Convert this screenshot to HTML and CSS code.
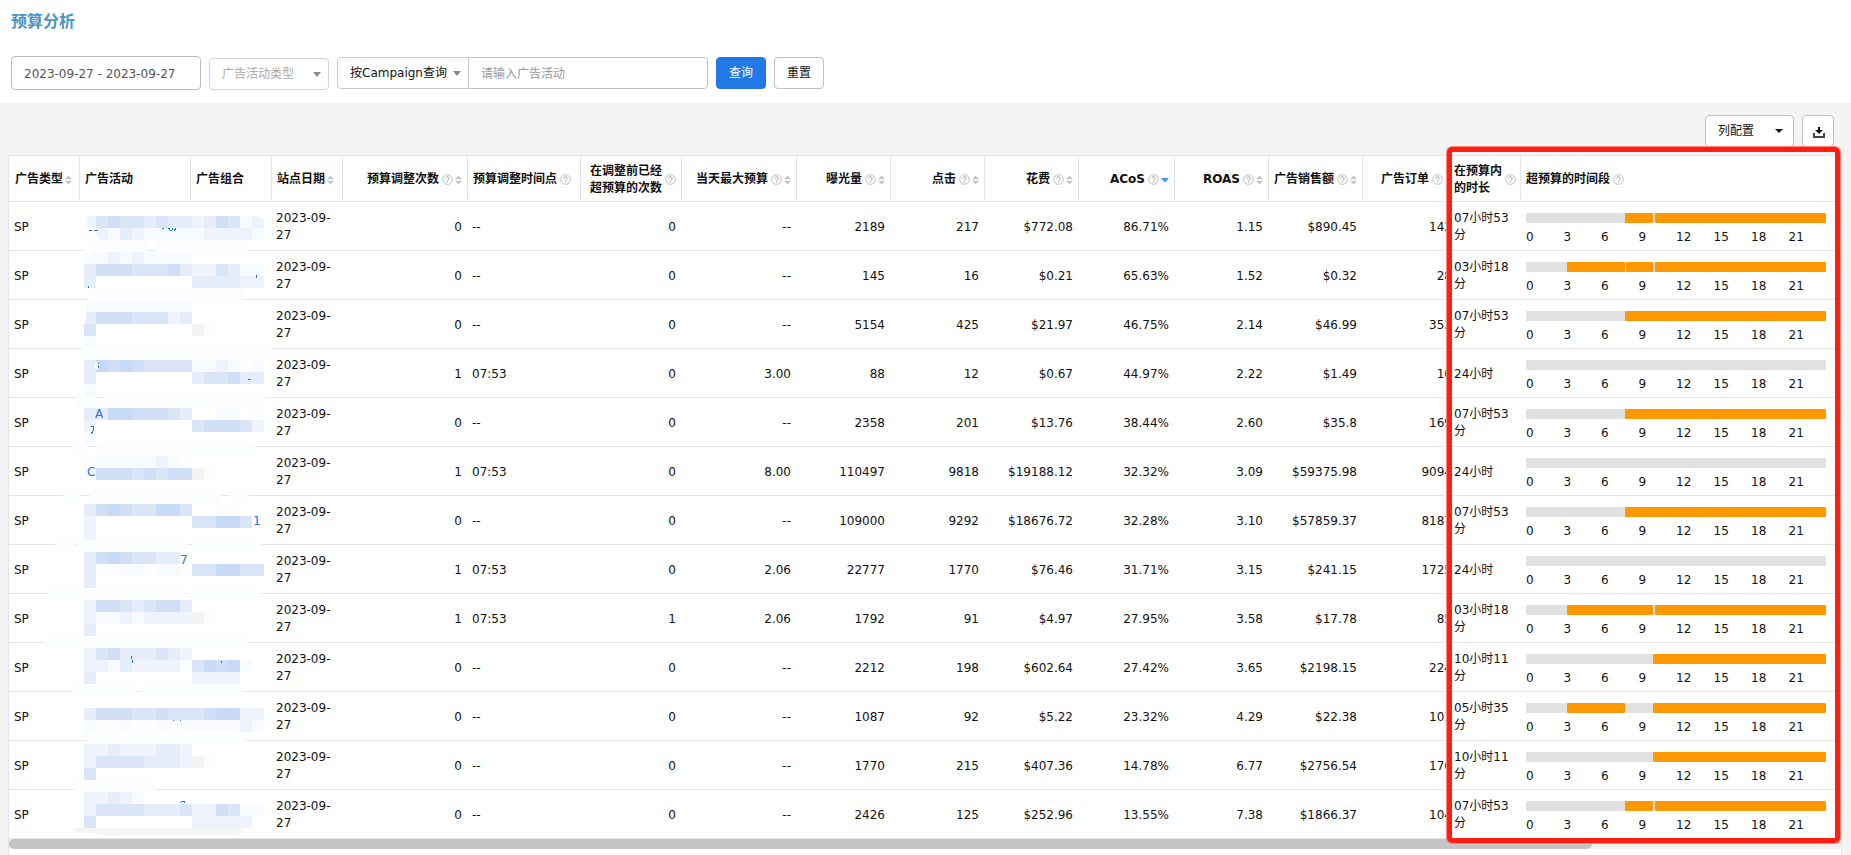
FILE: index.html
```
<!DOCTYPE html>
<html lang="zh-CN">
<head>
<meta charset="utf-8">
<title>预算分析</title>
<link rel="stylesheet" href="styles.css">
</head>
<body>
<header class="page-head">
  <h1 class="title">预算分析</h1>
  <form class="filters">
    <input class="field date-range" type="text" aria-label="日期范围" value="2023-09-27 - 2023-09-27">
    <span class="select-box type-box">
      <select class="field muted" aria-label="广告活动类型"><option>广告活动类型</option></select>
    </span>
    <span class="search-group">
      <span class="select-box mode-box">
        <select class="field" aria-label="查询方式"><option>按Campaign查询</option></select>
      </span>
      <input class="field keyword" type="text" aria-label="广告活动" placeholder="请输入广告活动">
    </span>
    <button class="btn primary" type="button">查询</button>
    <button class="btn" type="button">重置</button>
  </form>
</header>
<main class="content">
  <div class="toolbar">
    <button class="btn columns" type="button">列配置</button>
    <button class="btn icon-btn" type="button" aria-label="下载">
      <svg width="14" height="16" viewBox="0 0 14 16"><path d="M7 4h2v3h3l-4 4-4-4h3z" fill="#111"/><path d="M3 10v4h10v-4" fill="none" stroke="#444" stroke-width="2"/></svg>
    </button>
  </div>
  <section class="panel">
    <table class="grid">
      <colgroup>
        <col class="w-type"><col class="w-campaign"><col class="w-group"><col class="w-date">
        <col class="w-count"><col class="w-time"><col class="w-before"><col class="w-max">
        <col class="w-num"><col class="w-num"><col class="w-num"><col class="w-acos">
        <col class="w-num"><col class="w-num"><col class="w-orders"><col class="w-duration"><col>
      </colgroup>
      <thead><tr id="head"></tr></thead>
      <tbody id="rows"></tbody>
    </table>
    <svg class="mosaic" id="mosaic" width="280" height="684" viewBox="9 156 280 684" shape-rendering="crispEdges" aria-hidden="true"></svg>
    <div class="scroll-track"><div class="scroll-thumb"></div></div>
    <div class="highlight"></div>
  </section>
</main>
<script src="table.js"></script>
</body>
</html>
```
FILE: styles.css
```
* { box-sizing: border-box; }

body {
  margin: 0;
  min-height: 100vh;
  display: flex;
  flex-direction: column;
  overflow: hidden;
  background: #f4f4f4;
  color: #111;
  font: 12px/17px "DejaVu Sans", "Noto Sans CJK SC", sans-serif;
}

.page-head { padding: 10px 11px 13px; background: #fff; }
.title { margin: 0 0 22px; font-size: 16px; line-height: 24px; font-weight: 700; color: #4a94c6; }

.filters { display: flex; align-items: center; gap: 8px; }

.field {
  height: 32px;
  border: 1px solid #c8c8c8;
  border-radius: 4px;
  padding: 0 12px;
  background: #fff;
  color: #111;
  font: inherit;
}
.field::placeholder { color: #999; opacity: 1; }
.date-range { width: 190px; height: 34px; padding-top: 2px; border-color: #bbb; color: #555; }
.muted { color: #aaa; border-color: #d4d4d4; }

.select-box { position: relative; display: block; }
.select-box .field { width: 100%; appearance: none; display: block; }
.select-box::after {
  content: "";
  position: absolute;
  right: 8px;
  top: 14px;
  border: 4px solid transparent;
  border-top: 5px solid #888;
  border-bottom: 0;
  pointer-events: none;
}
.type-box { width: 120px; padding-top: 2px; }
.type-box::after { top: 16px; }
.mode-box { width: 132px; }
.mode-box .field { border-radius: 4px 0 0 4px; }
.search-group { display: flex; }
.keyword { width: 240px; margin-left: -1px; padding-top: 2px; border-radius: 0 4px 4px 0; border-color: #c0c0c0; }

.btn {
  height: 32px;
  padding: 0 12px;
  border: 1px solid #bfbfc4;
  border-radius: 4px;
  background: #fff;
  color: #111;
  font: inherit;
}
.filters .btn { width: 50px; }
.filters .primary { border-color: #2278e6; background: #2278e6; color: #fff; }

.content { flex: 1; display: flex; flex-direction: column; padding: 0 9px 0 8px; }
.toolbar { display: flex; justify-content: flex-end; gap: 8px; padding: 12px 8px 8px; }
.columns { display: flex; align-items: center; justify-content: space-between; width: 89px; padding: 0 10px 0 12px; }
.columns::after { content: ""; border: 4px solid transparent; border-top-color: #111; border-bottom: 0; }
.icon-btn { display: flex; align-items: center; justify-content: center; width: 32px; padding: 0; }

.panel { position: relative; flex: 1; border: 1px solid #e4e5e9; border-bottom: 0; background: #fff; }
.grid { width: 100%; table-layout: fixed; border-collapse: separate; border-spacing: 0; }
.w-type { width: 71px; }
.w-campaign { width: 111px; }
.w-group { width: 81px; }
.w-date { width: 71px; }
.w-count { width: 125px; }
.w-time { width: 113px; }
.w-before { width: 101px; }
.w-max { width: 115px; }
.w-num { width: 94px; }
.w-acos { width: 96px; }
.w-orders { width: 85px; }
.w-duration { width: 73px; }

.grid th {
  height: 46px;
  padding: 2px 5px 0;
  border-right: 1px solid #e4e5e9;
  border-bottom: 1px solid #e4e5e9;
  text-align: left;
  font-weight: 700;
  overflow: hidden;
}
.grid th:first-child { padding-left: 6px; }
.grid th:last-child { border-right: 0; }
.grid td { height: 49px; padding: 2px 6px 0 4px; border-bottom: 1px solid #e4e5e9; }
.grid td:first-child { padding-left: 5px; }
.head-cell { display: flex; align-items: center; }
.head-cell svg { flex: none; }
.head-cell .help { margin-left: 3px; }
.head-cell .sort { margin-left: 2px; }
.grid .num { text-align: right; }
.num .head-cell { justify-content: flex-end; }
.grid .clipped { padding-right: 0; border-right: 0; overflow: hidden; }
.clipped > div { margin-right: -4px; }
.grid .duration { padding-left: 6px; padding-right: 2px; }

.grid .timeline { padding: 7px 15px 0 5px; }
.bar { display: flex; height: 10px; background: #e1e1e1; }
.over { background: #ff9800; border-radius: 1px; }
.hours { display: grid; grid-template-columns: repeat(8, 1fr); margin-top: 6px; }

.mosaic { position: absolute; left: 0; top: 0; pointer-events: none; }
.mosaic text { font: 12px "DejaVu Sans", sans-serif; fill: #2673e0; }

.scroll-track { height: 10px; background: #f1f1f1; }
.scroll-thumb { width: 86.4%; height: 10px; border-radius: 5px; background: #c4c4c4; }

.highlight {
  position: absolute;
  top: -9px;
  right: 1px;
  width: 393px;
  height: 696px;
  border: 5px solid #ff1f10;
  border-radius: 5px;
  box-shadow: 0 0 0 1px #ff8a82;
  pointer-events: none;
}
```
FILE: table.js
```
const HELP = '<svg class="help" width="11" height="11" viewBox="0 0 11 11"><circle cx="5.5" cy="5.5" r="4.8" fill="none" stroke="#bcbdc2"/><path d="M3.9 4.4a1.6 1.5 0 1 1 2.4 1.3q-.8.4-.8 1.1M5.5 7.6v1.1" fill="none" stroke="#b4b5ba" stroke-width="1.1"/></svg>';
const SORT = '<svg class="sort" width="7" height="10" viewBox="0 0 7 10"><path d="M3.5 0.5 7 4.3H0zM3.5 9.5 7 5.7H0z" fill="#c4c5ca"/></svg>';
const SORT_DESC = '<svg class="sort" width="8" height="10" viewBox="0 0 8 10"><path d="M0 3h8L4 7.5z" fill="#4a90ee"/></svg>';

// label, cell class, icons
const columns = [
  ['广告类型', '', SORT], ['广告活动', '', ''], ['广告组合', '', ''], ['站点日期', '', SORT],
  ['预算调整次数', 'num', HELP + SORT], ['预算调整时间点', '', HELP],
  ['在调整前已经<br>超预算的次数', 'num', HELP], ['当天最大预算', 'num', HELP + SORT],
  ['曝光量', 'num', HELP + SORT], ['点击', 'num', HELP + SORT], ['花费', 'num', HELP + SORT],
  ['ACoS', 'num', HELP + SORT_DESC], ['ROAS', 'num', HELP + SORT], ['广告销售额', 'num', HELP + SORT],
  ['广告订单', 'num clipped', HELP + SORT], ['在预算内<br>的时长', 'duration', HELP], ['超预算的时间段', '', HELP]
];

// Over-budget periods, as [start, end] on a scale of 300 for the day
const A = [[99, 127], [129, 300]], B = [[99, 300]], C = [[127, 300]];
const records = [
  ['0', '--', '0', '--', '2189', '217', '$772.08', '86.71%', '1.15', '$890.45', '142', '07小时53分', A],
  ['0', '--', '0', '--', '145', '16', '$0.21', '65.63%', '1.52', '$0.32', '28', '03小时18分', [[41, 99], [100, 127], [129, 300]]],
  ['0', '--', '0', '--', '5154', '425', '$21.97', '46.75%', '2.14', '$46.99', '353', '07小时53分', B],
  ['1', '07:53', '0', '3.00', '88', '12', '$0.67', '44.97%', '2.22', '$1.49', '10', '24小时', []],
  ['0', '--', '0', '--', '2358', '201', '$13.76', '38.44%', '2.60', '$35.8', '169', '07小时53分', B],
  ['1', '07:53', '0', '8.00', '110497', '9818', '$19188.12', '32.32%', '3.09', '$59375.98', '9094', '24小时', []],
  ['0', '--', '0', '--', '109000', '9292', '$18676.72', '32.28%', '3.10', '$57859.37', '8187', '07小时53分', B],
  ['1', '07:53', '0', '2.06', '22777', '1770', '$76.46', '31.71%', '3.15', '$241.15', '1725', '24小时', []],
  ['1', '07:53', '1', '2.06', '1792', '91', '$4.97', '27.95%', '3.58', '$17.78', '85', '03小时18分', [[41, 127], [129, 300]]],
  ['0', '--', '0', '--', '2212', '198', '$602.64', '27.42%', '3.65', '$2198.15', '224', '10小时11分', C],
  ['0', '--', '0', '--', '1087', '92', '$5.22', '23.32%', '4.29', '$22.38', '101', '05小时35分', [[41, 99], [127, 300]]],
  ['0', '--', '0', '--', '1770', '215', '$407.36', '14.78%', '6.77', '$2756.54', '176', '10小时11分', C],
  ['0', '--', '0', '--', '2426', '125', '$252.96', '13.55%', '7.38', '$1866.37', '104', '07小时53分', A]
];

const hours = '<div class="hours">' + [0, 3, 6, 9, 12, 15, 18, 21].map(h => `<span>${h}</span>`).join('') + '</div>';

function bar(periods) {
  let at = 0;
  return '<div class="bar">' + periods.map(([from, to]) => {
    const html = `<span style="width:${(from - at) / 3}%"></span><span class="over" style="width:${(to - from) / 3}%"></span>`;
    at = to;
    return html;
  }).join('') + '</div>';
}

document.getElementById('head').innerHTML = columns.map(([label, cls, icons]) =>
  `<th scope="col" class="${cls}"><div class="head-cell"><span>${label}</span>${icons}</div></th>`).join('');

document.getElementById('rows').innerHTML = records.map(r => {
  const metrics = r.slice(0, 10).map((v, i) => `<td class="${i === 1 ? '' : 'num'}">${v}</td>`).join('');
  return `<tr><td>SP</td><td></td><td></td><td>2023-09-27</td>${metrics}<td class="num clipped"><div>${r[10]}</div></td><td class="duration">${r[11]}</td><td class="timeline">${bar(r[12])}${hours}</td></tr>`;
}).join('');

// Pixelated cover over the private names: 12px tiles, one letter per shade
const shades = { a: '#f7fafe', b: '#eef3fd', c: '#e5edfa', d: '#dbe5f8', e: '#d0dff6', f: '#c6d9f5', g: '#f4f4f3', h: '#fcfdfe' };
const wipes = [
  [92, 240, 55], [155, 240, 94], [88, 288, 155], [82, 348, 190], [77, 396, 18], [105, 396, 161],
  [71, 444, 18], [98, 444, 157], [63, 492, 18], [90, 492, 131], [230, 492, 19], [55, 540, 19], [76, 540, 111], [192, 540, 69],
  [47, 588, 138], [188, 588, 73], [45, 636, 202], [71, 684, 64], [141, 684, 102], [86, 732, 159], [74, 780, 81]
];
const tiles = {
  216: 'bdeddcdccbcedab', 228: '.bacbaaaaabbbba', 252: 'aababaaaa', 264: 'ceeedddecbbdcaa', 276: 'c........ccccbb',
  300: 'aaaaaaaaa', 312: 'ceeedddbc', 324: 'd........gh', 336: 'a',
  360: 'cfefeddddaabaha', 372: 'c........cddecc', 384: 'a',
  408: 'ccffeeedc..aa.h', 420: 'b........deeedb', 432: 'a',
  456: 'haaaaabah', 468: 'aeeededeegh', 504: 'cefeddffd..hh', 516: 'b........ddffd', 528: 'b',
  552: 'cefeddcc', 564: 'chhaahaa.ddffdd', 576: 'c', 600: 'beedcdeec', 612: 'baababbbbgh', 624: 'c',
  648: 'bdecccdcb', 660: 'bbacbbbbhdfefa', 672: 'c........bbbb',
  708: 'ceeeddedddeffbb', 720: 'ahhahhahaaaaaba', 744: 'bbcbbbccb', 756: 'bddddcccbgh', 768: 'd',
  792: 'bbcba', 804: 'bddddcccdbbedaa', 816: 'd........bbbbb'
};
const marks = [['A', 95, 418], ['C', 87, 476], ['1', 253, 525], ['7', 180, 564]];

let art = wipes.map(([x, y, w]) => `<rect x="${x}" y="${y}" width="${w}" height="12" fill="#fcfefd"/>`).join('');
for (const [y, line] of Object.entries(tiles)) {
  [...line].forEach((k, i) => {
    if (shades[k]) art += `<rect x="${84 + i * 12}" y="${y}" width="12" height="12" fill="${shades[k]}"/>`;
  });
}
art += '<path d="M71 828H245l-8 7H130l-20 1-20-3-14-1z" fill="#f6f6f6"/>';
art += '<path d="M84 210h4l-1 18 9 3 3 9H84zM249 214h16v8q-3-7-16-8zM84 264V256l9-4v-3h-9zM84 300h4l-3 24h-1zM96 359l-1 10 3 1zM156 600" fill="#fff"/>';
art += '<path d="M89 230.500h3m2 0h4M162 228.500h2M168 228h1v2m3-2v2l-2 1m6-3-2 3M88 286v2M256 275v3M98 363v1m0 2v2M248 379.500h3M91 426h2v5l-2 3M131 656v3m1 1v3M221 661v2M173 720.500h1m6 0h1M180 802.500l2-1h2l1 1" fill="none" stroke="#2673e0"/>';
art += marks.map(([t, x, y]) => `<text x="${x}" y="${y}">${t}</text>`).join('');
document.getElementById('mosaic').innerHTML = art;
```
